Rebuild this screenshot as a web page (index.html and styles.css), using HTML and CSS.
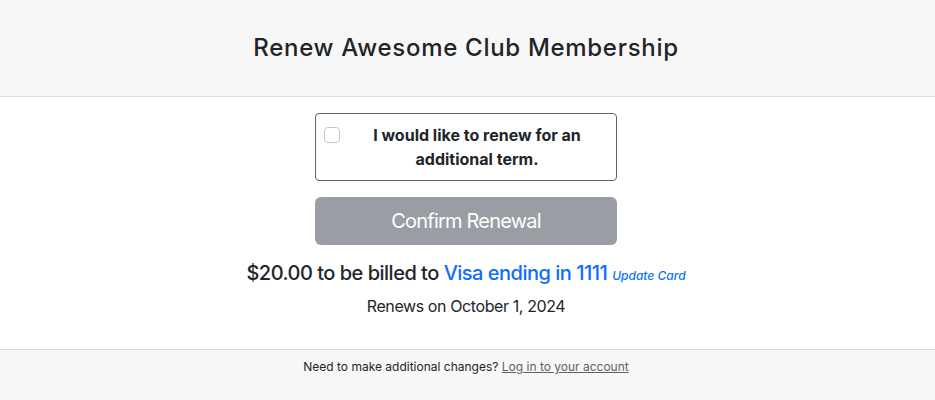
FILE: index.html
```html
<!DOCTYPE html>
<html>
<head>
<meta charset="utf-8">
<link rel="stylesheet" href="styles.css">
</head>
<body>
<div class="card">
  <header class="card-header">
    <h1 class="title">Renew Awesome Club Membership</h1>
  </header>
  <main class="card-body">
    <label class="renew-box">
      <span class="check"></span>
      <span class="renew-label">I would like to renew for an additional term.</span>
    </label>
    <button class="btn-confirm" disabled>Confirm Renewal</button>
    <p class="billing">$20.00 to be billed to <a class="card-link" href="#">Visa ending in 1111</a> <a class="update" href="#">Update Card</a></p>
    <p class="renews">Renews on October 1, 2024</p>
  </main>
  <footer class="card-footer">
    Need to make additional changes? <a class="login" href="#">Log in to your account</a>
  </footer>
</div>
</body>
</html>
```
FILE: styles.css
```css
html, body {
  margin: 0;
  padding: 0;
  background: #fff;
  font-family: Inter, "Liberation Sans", sans-serif;
  color: #212529;
}
.card {
  display: flex;
  flex-direction: column;
  height: 400px;
}
.card-header {
  background: #f7f7f7;
  border-bottom: 1px solid #d9d9d9;
  height: 96px;
  display: flex;
  align-items: center;
  justify-content: center;
  padding-right: 3px;
}
.title {
  margin: 0;
  font-size: 24px;
  font-weight: 500;
  line-height: 1.2;
  letter-spacing: 0.7px;
}
.card-body {
  display: flex;
  flex-direction: column;
  align-items: center;
  padding: 16px 3px 0 0;
  height: 252px;
  box-sizing: border-box;
}
.renew-box {
  width: 302px;
  box-sizing: border-box;
  border: 1px solid #5c636a;
  border-radius: 4px;
  display: flex;
  align-items: flex-start;
  padding: 9px 8px 9px 8px;
  height: 68px;
}
.check {
  width: 16px;
  height: 16px;
  box-sizing: border-box;
  border: 1px solid #c4c7ca;
  border-radius: 4px;
  margin-top: 4px;
  flex: none;
}
.renew-label {
  flex: 1;
  text-align: center;
  font-weight: 700;
  font-size: 16px;
  line-height: 24px;
  padding: 0 12px 0 18px;
}
.btn-confirm {
  margin-top: 16px;
  width: 302px;
  height: 48px;
  border: none;
  border-radius: 6px;
  background: #9a9da4;
  color: #fff;
  font-family: inherit;
  font-size: 20px;
  font-weight: 400;
  letter-spacing: -0.8px;
}
.billing {
  margin: 16px 0 0;
  font-size: 20px;
  line-height: 24px;
  font-weight: 500;
  letter-spacing: -0.5px;
}
.card-link {
  color: #0d6efd;
  text-decoration: none;
}
.update {
  color: #0d6efd;
  text-decoration: none;
  font-style: italic;
  font-size: 12px;
  font-weight: 500;
  letter-spacing: 0;
}
.renews {
  margin: 6px 0 0;
  font-size: 16px;
  line-height: 24px;
  letter-spacing: -0.4px;
}
.card-footer {
  flex: 1;
  background: #f7f7f7;
  border-top: 1px solid #d9d9d9;
  text-align: center;
  font-size: 12px;
  padding: 9px 3px 0 0;
}
.login {
  color: #5c636a;
}
```
